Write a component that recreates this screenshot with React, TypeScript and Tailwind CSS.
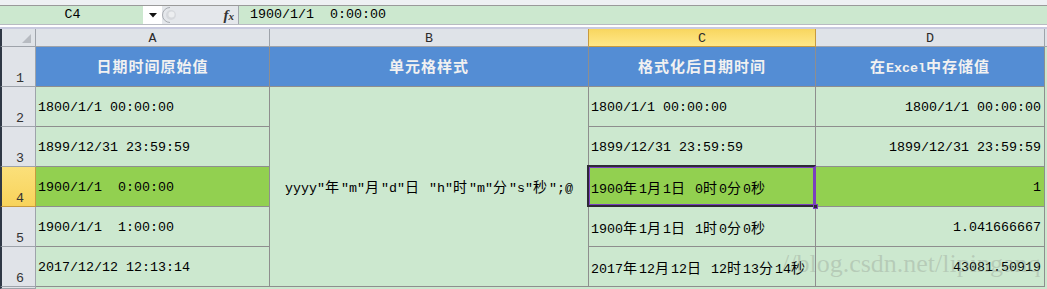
import type { ReactNode } from "react"

const CJK = /([\u2E80-\u9FFF\uFF00-\uFFEF]+)/

function Txt({ s, bold = false }: { s: string; bold?: boolean }) {
  const parts = s.split(CJK)
  return (
    <span className="whitespace-pre">
      {parts.map((p, i) =>
        i % 2 === 1 ? (
          <span
            key={i}
            className={
              bold
                ? "font-['Noto_Sans_CJK_SC',sans-serif] text-[15px] tracking-[1px] font-bold"
                : "font-['Noto_Sans_CJK_SC',sans-serif] text-[14px] tracking-[2px]"
            }
          >
            {p}
          </span>
        ) : (
          <span key={i}>{p}</span>
        )
      )}
    </span>
  )
}

const grid = "border-r border-b border-[#8e8e8e]"

function RowHead({ n, active = false }: { n?: string; active?: boolean }) {
  return (
    <div
      className={`flex items-end justify-center pl-[3px] pb-[1px] border-l-2 border-l-[#2f3845] border-r border-b text-[#333] ${
        active
          ? "bg-gradient-to-b from-[#fbe07a] to-[#f8d35a] border-r-[#c89a3e] border-b-[#c89a3e]"
          : "bg-[#e0e3e8] border-r-[#9ea3aa] border-b-[#9ea3aa]"
      }`}
    >
      {n}
    </div>
  )
}

function ColHead({ c, active = false, edge = "border-r-[#9ea3aa]" }: { c: string; active?: boolean; edge?: string }) {
  return (
    <div
      className={`flex items-center justify-center pt-[2px] border-r border-b text-[#2b2b2b] ${edge} ${
        active
          ? "bg-gradient-to-b from-[#f8d65e] to-[#ffe888] border-b-[#c89a3e]"
          : "bg-[#dfe3e8] border-b-[#9ea3aa]"
      }`}
    >
      {c}
    </div>
  )
}

function Cell({
  children,
  bg = "",
  right = false,
}: {
  children?: ReactNode
  bg?: string
  right?: boolean
}) {
  return (
    <div
      className={`flex items-center pt-[3px] ${right ? "justify-end pr-[3px]" : "pl-[2px]"} ${grid} ${bg} whitespace-pre overflow-hidden`}
    >
      {children}
    </div>
  )
}

function Title({ s }: { s: string }) {
  return (
    <div className={`flex items-center justify-center bg-[#548dd4] text-[#f1f1f1] font-bold ${grid}`}>
      <Txt s={s} bold />
    </div>
  )
}

function FormulaBar() {
  return (
    <div className="flex h-[18px] bg-[#cce8cf]">
      <div className="w-[143px] flex items-center justify-center pl-[2px]">C4</div>
      <div className="w-[19px] bg-white flex items-center justify-center">
        <svg width="8" height="5" viewBox="0 0 8 5">
          <path d="M0 0h8L4 4.5z" fill="#111" />
        </svg>
      </div>
      <div className="w-[76px] bg-[#e4e7eb] flex items-center justify-between pr-[4px]">
        <svg width="16" height="18" viewBox="0 0 16 18">
          <path d="M8 1.5a7.5 7.5 0 0 0 0 15" fill="none" stroke="#a9adb3" />
          <circle cx="9" cy="9" r="5" fill="#d6d9dd" />
          <circle cx="9.5" cy="8.5" r="3" fill="#eceef0" />
        </svg>
        <span className="font-['Liberation_Serif',serif] italic font-bold text-[15px] text-[#333] leading-none">
          f<span className="text-[11px]">x</span>
        </span>
      </div>
      <div className="flex-1 border-l border-[#a3a8ae] flex items-center pl-[11px] whitespace-pre">1900/1/1  0:00:00</div>
    </div>
  )
}

export default function App() {
  const green = "bg-[#92d050]"
  return (
    <div className="relative w-[1047px] h-[289px] overflow-hidden bg-[#cce8cf] text-black text-[13.33px] leading-none font-['Liberation_Mono','Noto_Sans_CJK_SC',monospace]">
      <div className="h-[6px] bg-[#eef0f3] border-b border-[#9a9a9a]" />
      <FormulaBar />
      <div className="h-[5px] bg-white border-t border-[#b8bbc2] border-b-2 border-b-[#c8cadf]" />

      <div className="grid grid-cols-[36px_234px_319px_227px_229px_2px] grid-rows-[18px_40px_40px_40px_40px_40px_40px_2px]">
        {/* corner + column letters */}
        <div className="relative bg-[#dfe3e8] border-l-2 border-l-[#2f3845] border-r border-b border-[#9ea3aa]">
          <svg className="absolute right-[4px] bottom-[3px]" width="9" height="9" viewBox="0 0 9 9">
            <path d="M9 0v9H0z" fill="#b7bbc1" />
          </svg>
        </div>
        <ColHead c="A" />
        <ColHead c="B" edge="border-r-[#c89a3e]" />
        <ColHead c="C" active edge="border-r-[#c89a3e]" />
        <ColHead c="D" />
        <div className="bg-[#dfe3e8] border-b border-[#9ea3aa]" />

        {/* row 1 */}
        <RowHead n="1" />
        <Title s="日期时间原始值" />
        <Title s="单元格样式" />
        <Title s="格式化后日期时间" />
        <Title s="在Excel中存储值" />
        <div />

        {/* row 2 */}
        <RowHead n="2" />
        <Cell>1800/1/1 00:00:00</Cell>
        <div className={`row-span-5 flex items-center justify-center pt-[2px] ${grid}`}>
          <Txt s={'yyyy"年"m"月"d"日 "h"时"m"分"s"秒";@'} />
        </div>
        <Cell>1800/1/1 00:00:00</Cell>
        <Cell right>1800/1/1 00:00:00</Cell>
        <div />

        {/* row 3 */}
        <RowHead n="3" />
        <Cell>1899/12/31 23:59:59</Cell>
        <Cell>1899/12/31 23:59:59</Cell>
        <Cell right>1899/12/31 23:59:59</Cell>
        <div />

        {/* row 4 */}
        <RowHead n="4" active />
        <Cell bg={green}>{"1900/1/1  0:00:00"}</Cell>
        <div className={`relative flex items-center pt-[3px] pl-[2px] ${grid} ${green}`}>
          <Txt s="1900年1月1日 0时0分0秒" />
          <div className="absolute -left-[2px] -top-[2px] -right-[1px] -bottom-[1px] z-10 border-2 border-[#2e2a35] border-r-[#7a3fc0] shadow-[inset_0_0_0_1px_#7a3fc0]" />
          <div className="absolute -right-[3px] -bottom-[3px] z-20 w-[5px] h-[5px] bg-[#2e2a35] border border-[#7a3fc0]" />
        </div>
        <Cell bg={green} right>1</Cell>
        <div />

        {/* row 5 */}
        <RowHead n="5" />
        <Cell>{"1900/1/1  1:00:00"}</Cell>
        <Cell>
          <Txt s="1900年1月1日 1时0分0秒" />
        </Cell>
        <Cell right>1.041666667</Cell>
        <div />

        {/* row 6 */}
        <RowHead n="6" />
        <Cell>2017/12/12 12:13:14</Cell>
        <Cell>
          <Txt s="2017年12月12日 12时13分14秒" />
        </Cell>
        <Cell right>43081.50919</Cell>
        <div />

        {/* row 7, cut off */}
        <RowHead />
        <div />
        <div />
        <div />
        <div />
        <div />
      </div>

      <div className="absolute left-[782px] top-[251px] z-30 whitespace-nowrap leading-none text-[26px] font-['Liberation_Serif',serif] text-[rgba(140,150,140,0.35)] pointer-events-none">
        //blog.csdn.net/lipinganq
      </div>
    </div>
  )
}
